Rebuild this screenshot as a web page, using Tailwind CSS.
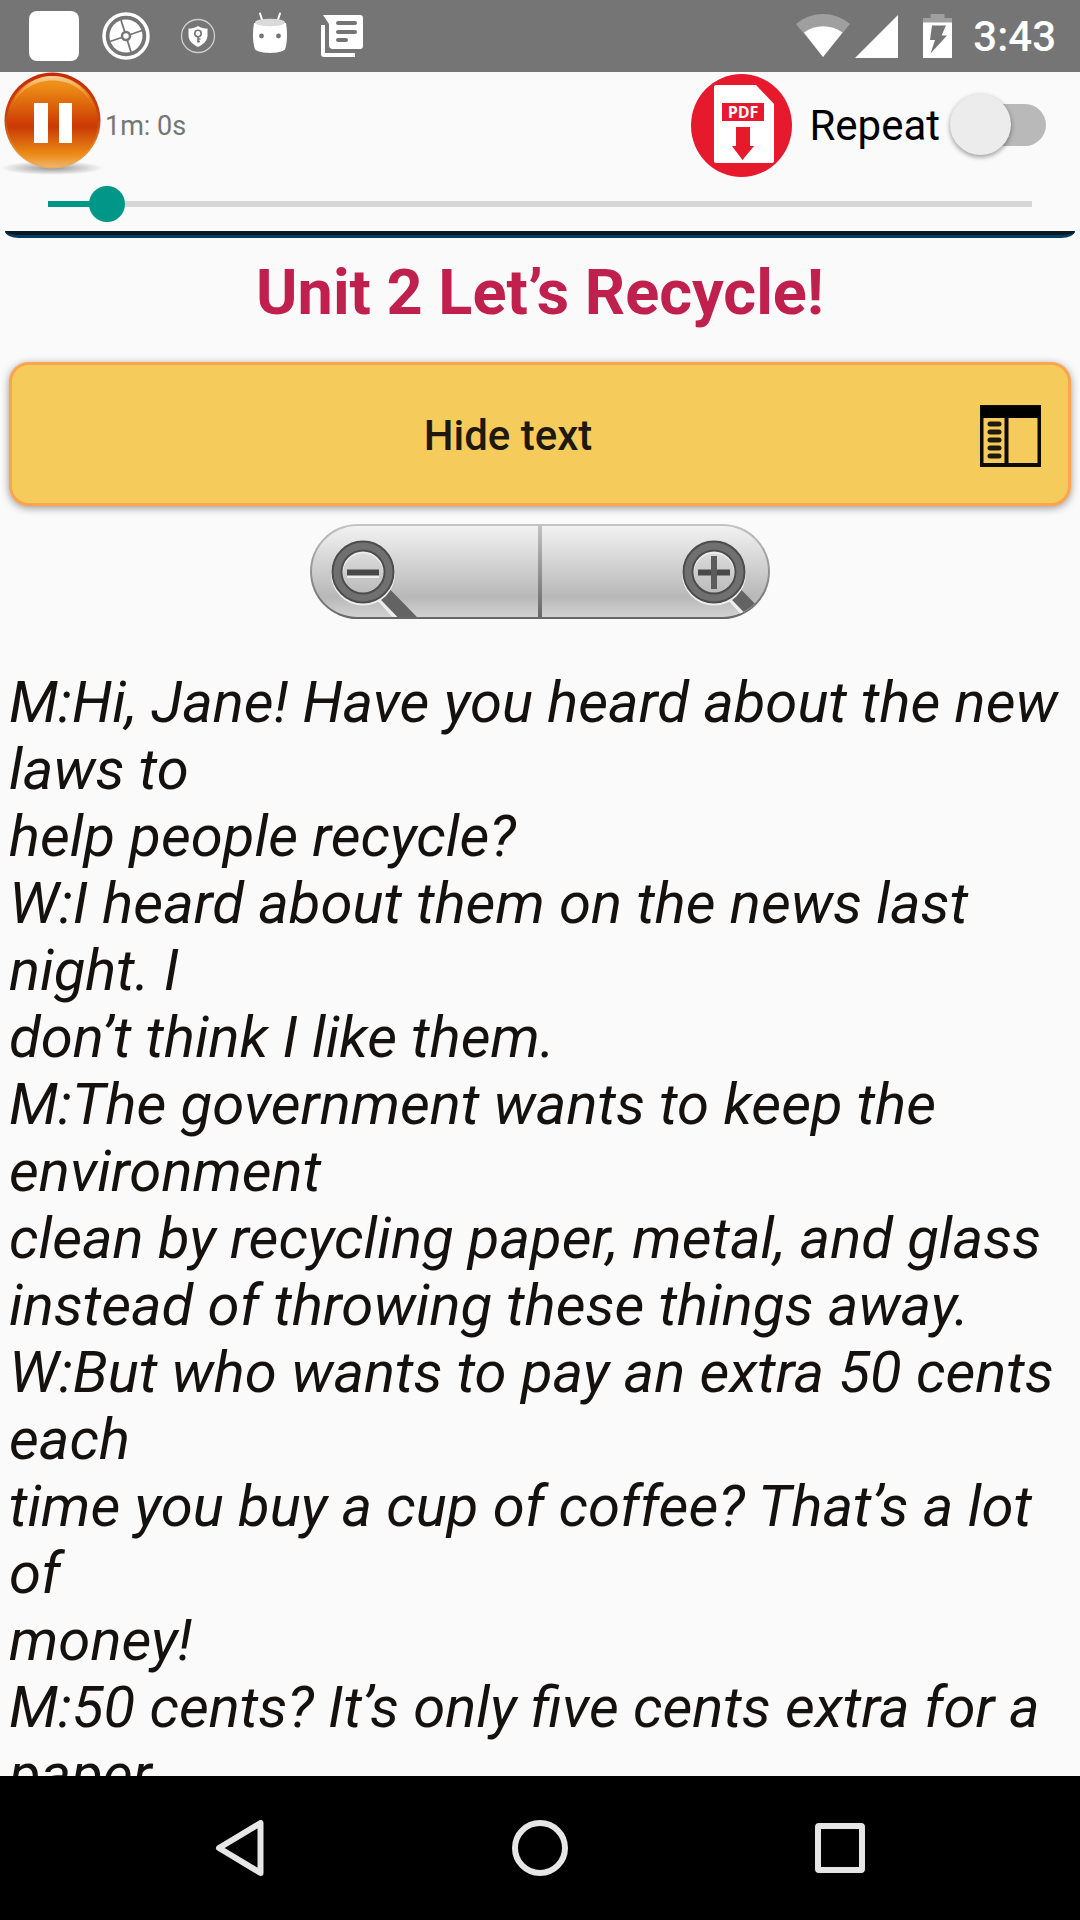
<!DOCTYPE html>
<html lang="en">
<head>
    <meta charset="UTF-8">
    <meta name="viewport" content="width=device-width, initial-scale=1.0">
    <title>Unit 2 Let’s Recycle!</title>
    <script src="https://cdn.jsdelivr.net/npm/@tailwindcss/browser@4"></script>
</head>
<body class="h-screen flex flex-col overflow-hidden bg-[#fafafa] font-[Roboto,sans-serif]">
    <!-- status bar -->
    <div class="h-[72px] shrink-0 bg-[#757575] text-white flex justify-between items-center pl-[18px] pr-6">
        <div class="flex items-center">
            <div class="w-[72px] flex justify-center"><div class="size-[50px] rounded-lg bg-white"></div></div>
            <svg class="w-[72px] h-[72px]" viewBox="0 0 72 72" fill="none">
                <circle cx="36" cy="36" r="22" stroke="#fff" stroke-width="3.5"/>
                <circle cx="36" cy="36" r="16.5" fill="#fff"/>
                <path d="M36 36L31 20M36 36L52 30.500M36 36L41 52M36 36L20 41.500" stroke="#757575" stroke-width="1.800"/>
                <circle cx="36" cy="36" r="4" fill="#fff" stroke="#757575" stroke-width="2.500"/>
            </svg>
            <svg class="w-[72px] h-[72px]" viewBox="0 0 72 72" fill="none">
                <circle cx="36" cy="36" r="16.500" stroke="#d0d0d0" stroke-width="1.300"/>
                <path d="M36 26c3 2 6 2.500 9.500 2.500v7c0 5-4 9-9.500 11.500c-5.500-2.500-9.500-6.500-9.500-11.500v-7c3.500 0 6.500-.5 9.500-2.500z" fill="#fff"/>
                <circle cx="36" cy="33.500" r="3.200" stroke="#757575" stroke-width="1.600"/>
                <path d="M36 36.500v6M36 39h2.500M36 41.500h2" stroke="#757575" stroke-width="1.600"/>
            </svg>
            <svg class="w-[72px] h-[72px]" viewBox="0 0 72 72" fill="none">
                <path d="M26 13.500l3 9M46 13.500l-3 9" stroke="#fff" stroke-width="2" stroke-linecap="round"/>
                <path d="M20 23c-1.500 9-1.500 19 1 26.500c5 4.500 25 4.500 30 0c2.500-7.500 2.500-17.500 1-26.500z" fill="#fff"/>
                <ellipse cx="36" cy="22.500" rx="15" ry="3.800" fill="#dadada"/>
                <circle cx="27.500" cy="36" r="2.400" fill="#757575"/>
                <circle cx="44.500" cy="36" r="2.400" fill="#757575"/>
            </svg>
            <svg class="w-[72px] h-[72px]" viewBox="0 0 72 72" fill="none">
                <path d="M17 15h37a3 3 0 0 1 3 3v28a3 3 0 0 1-3 3H27a4 4 0 0 1-4-4V24z" fill="#fff"/>
                <path d="M15 25h4v28h30v4H18a3 3 0 0 1-3-3z" fill="#fff"/>
                <path d="M32 23h17M32 32h17M32 40h8" stroke="#757575" stroke-width="4" stroke-linecap="round"/>
            </svg>
        </div>
        <div class="flex items-center">
            <svg class="w-[54px] h-[44px]" viewBox="0 0 54 44">
                <path d="M27 43L0 10C16-3.300 38-3.300 54 10z" fill="#9f9f9f"/>
                <path d="M27 43L8 18.500C19 10 35 10 46.500 18.500z" fill="#fff"/>
            </svg>
            <svg class="w-[43px] h-[43px] ml-[5px]" viewBox="0 0 43 43"><path d="M43 0v43H0z" fill="#fff"/></svg>
            <svg class="w-[29px] h-[44px] ml-[25px]" viewBox="0 0 29 44">
                <path d="M7.500 0h14v4H29v5H0V4h7.500z" fill="#9f9f9f"/>
                <path d="M0 8.500h29V44H0z" fill="#fff"/>
                <path d="M9 11.500h14l-4.500 10H24L7.500 39.500L12 26H7z" fill="#757575"/>
            </svg>
            <span class="ml-[21px] pt-[2px] text-[42px] leading-[50px] font-medium">3:43</span>
        </div>
    </div>

    <!-- player controls -->
    <header class="shrink-0">
        <div class="h-[106px] flex items-center pr-[34px]">
            <button aria-label="Pause">
                <svg class="w-[105px] h-[106px]" viewBox="0 0 105 106">
                    <defs>
                        <linearGradient id="orange" x1="0" y1="0" x2="0" y2="1">
                            <stop offset="0" stop-color="#ef9a1c"/>
                            <stop offset=".12" stop-color="#ec8b16"/>
                            <stop offset=".5" stop-color="#cf4206"/>
                            <stop offset=".56" stop-color="#c93a06"/>
                            <stop offset=".86" stop-color="#ec8b16"/>
                            <stop offset="1" stop-color="#f0b46a"/>
                        </linearGradient>
                        <linearGradient id="rim" x1="0" y1="0" x2="0" y2="1">
                            <stop offset="0" stop-color="#c42a08"/>
                            <stop offset=".5" stop-color="#cc4410"/>
                            <stop offset=".8" stop-color="#e48a2c"/>
                            <stop offset="1" stop-color="#efae62"/>
                        </linearGradient>
                        <linearGradient id="gloss" x1="0" y1="0" x2="0" y2="1">
                            <stop offset="0" stop-color="#f7cf95"/>
                            <stop offset="1" stop-color="#ec8b16" stop-opacity=".4"/>
                        </linearGradient>
                        <radialGradient id="shade">
                            <stop offset="0" stop-color="#000" stop-opacity=".4"/>
                            <stop offset="1" stop-color="#000" stop-opacity="0"/>
                        </radialGradient>
                    </defs>
                    <ellipse cx="52" cy="96" rx="52" ry="7" fill="url(#shade)"/>
                    <circle cx="52.500" cy="48.500" r="48" fill="url(#rim)"/>
                    <circle cx="52.500" cy="49.500" r="45.500" fill="url(#orange)"/>
                    <path d="M12 34C27-6 78-6 93 34C77 0 28 0 12 34z" fill="url(#gloss)"/>
                    <path d="M34 31h14v40H34zM59 31h13v40H59z" fill="#fff"/>
                </svg>
            </button>
            <span class="pt-[2px] text-[27px] leading-8 text-[#757575]">1m: 0s</span>
            <button aria-label="Download PDF" class="ml-auto">
                <svg class="w-[102px] h-[106px]" viewBox="0 0 102 106">
                    <ellipse cx="50.500" cy="53.500" rx="50.500" ry="51.500" fill="#e6192d"/>
                    <path d="M25 13h40l18 19v57a2 2 0 0 1-2 2H25a2 2 0 0 1-2-2V15a2 2 0 0 1 2-2z" fill="#fff"/>
                    <path d="M31 31h42v18H31z" fill="#e6192d"/>
                    <text x="52" y="45.500" text-anchor="middle" font-family="Open Sans, sans-serif" font-weight="700" font-size="16" fill="#fff">PDF</text>
                    <path d="M45 55h14v19h4L51.500 88L41 74h4z" fill="#e6192d"/>
                </svg>
            </button>
            <label for="repeat" class="ml-4 pt-[2px] text-[42px] leading-[50px] text-black">Repeat</label>
            <input id="repeat" type="checkbox" class="appearance-none relative ml-[10px] w-24 h-[62px] before:absolute before:left-4 before:right-0 before:top-[10px] before:h-[42px] before:rounded-full before:bg-[#b9b9b9] after:absolute after:left-0 after:top-0 after:size-[61px] after:rounded-full after:bg-[#ececec] after:shadow-[0_2px_5px_rgba(0,0,0,0.4)]">
        </div>
        <div class="mt-2 px-[30px]">
            <input type="range" min="0" max="100" value="6" aria-label="Position" class="block w-full h-9 appearance-none bg-[linear-gradient(to_right,transparent_18px,#009688_18px,#009688_77px,#d6d6d6_77px,#d6d6d6_calc(100%-18px),transparent_calc(100%-18px))] bg-[length:100%_6px] bg-center bg-no-repeat [&::-webkit-slider-thumb]:appearance-none [&::-webkit-slider-thumb]:size-9 [&::-webkit-slider-thumb]:rounded-full [&::-webkit-slider-thumb]:bg-[#009688]">
        </div>
        <div class="mt-[9px] mx-[5px] h-[7px] bg-[#0b1822] border-b-3 border-[#053e64] rounded-b-[14px_7px]"></div>
    </header>

    <main class="flex-1 min-h-0 overflow-hidden px-[9px] pt-[18px]">
        <h1 class="text-center text-[63px] leading-[74px] font-bold text-[#c0204d]">Unit 2 Let’s Recycle!</h1>

        <button class="mt-8 w-full h-[144px] flex items-center pl-6 pr-[27px] pt-[3px] rounded-[20px] border-3 border-[#fca54d] bg-[#f5cb5c] shadow-[0_2px_8px_rgba(0,0,0,0.4)]">
            <span class="flex-1 text-center text-[42px] leading-[50px] font-medium text-[#1e190c]">Hide text</span>
            <svg class="w-[61px] h-[62px]" viewBox="0 0 61 62" fill="none">
                <path d="M1.500 1.500h58v58.500h-58z" stroke="#0d0b05" stroke-width="4"/>
                <path d="M1 1h59v12H1z" fill="#000"/>
                <path d="M26.500 12v48" stroke="#0d0b05" stroke-width="4"/>
                <path d="M10 19h9M10 27h9M10 35h9M10 43h9M10 51h9" stroke="#1f1a0c" stroke-width="5" stroke-linecap="round"/>
            </svg>
        </button>

        <!-- text size -->
        <div class="mt-[18px] mx-auto w-[460px] h-[95px] p-[2px] rounded-full bg-linear-to-b from-[#c4c4c4] to-[#666666]">
            <div class="h-full grid grid-cols-2 gap-1 rounded-full overflow-hidden">
                <button aria-label="Zoom out" class="flex pl-[18px] bg-linear-to-b from-[#f2f2f2] via-[#b8b8b8] via-78% to-[#d2d2d2]">
                    <svg class="w-[87px] h-[91px]" viewBox="0 0 87 91" fill="none">
                        <path d="M53 68L80 98" stroke="#eee" stroke-width="17"/>
                        <path d="M53 66L82 96" stroke="#636363" stroke-width="14"/>
                        <circle cx="33" cy="47.500" r="26" stroke="#ededed" stroke-width="12"/>
                        <circle cx="33" cy="46" r="26" stroke="#4c4c4c" stroke-width="11"/>
                        <circle cx="33" cy="46" r="26" stroke="#707070" stroke-width="7"/>
                        <path d="M17 50.500h32" stroke="#eee" stroke-width="3"/>
                        <path d="M17 46.500h32" stroke="#484848" stroke-width="6"/>
                    </svg>
                </button>
                <button aria-label="Zoom in" class="flex justify-end bg-linear-to-b from-[#f2f2f2] via-[#b8b8b8] via-78% to-[#d2d2d2]">
                    <svg class="w-[87px] h-[91px]" viewBox="0 0 87 91" fill="none">
                        <path d="M53 68L80 98" stroke="#eee" stroke-width="17"/>
                        <path d="M53 66L82 96" stroke="#636363" stroke-width="14"/>
                        <circle cx="33" cy="47.500" r="26" stroke="#ededed" stroke-width="12"/>
                        <circle cx="33" cy="46" r="26" stroke="#4c4c4c" stroke-width="11"/>
                        <circle cx="33" cy="46" r="26" stroke="#707070" stroke-width="7"/>
                        <path d="M17 46.500h32" stroke="#484848" stroke-width="6"/>
                        <path d="M33 30v33" stroke="#5c5c5c" stroke-width="6"/>
                    </svg>
                </button>
            </div>
        </div>

        <p class="mt-[50px] text-[58px] leading-[67px] italic text-[#15110f]">
            M:Hi, Jane! Have you heard about the new laws to<br>
            help people recycle?<br>
            W:I heard about them on the news last night. I<br>
            don’t think I like them.<br>
            M:The government wants to keep the environment<br>
            clean by recycling paper, metal, and glass<br>
            instead of throwing these things away.<br>
            W:But who wants to pay an extra 50 cents each<br>
            time you buy a cup of coffee? That’s a lot of<br>
            money!<br>
            M:50 cents? It’s only five cents extra for a paper
        </p>
    </main>

    <nav class="h-36 shrink-0 bg-black flex justify-center">
        <button aria-label="Back" class="w-[300px] flex justify-center items-center">
            <svg class="size-14" viewBox="0 0 56 56" fill="none"><path d="M48.500 3v50L7 28z" stroke="#e6e6e6" stroke-width="6" stroke-linejoin="round"/></svg>
        </button>
        <button aria-label="Home" class="w-[300px] flex justify-center items-center">
            <svg class="size-14" viewBox="0 0 56 56" fill="none"><circle cx="28" cy="28" r="25" stroke="#e6e6e6" stroke-width="6"/></svg>
        </button>
        <button aria-label="Recent apps" class="w-[300px] flex justify-center items-center">
            <svg class="size-14" viewBox="0 0 56 56" fill="none"><rect x="6" y="6" width="44" height="44" rx="1" stroke="#e6e6e6" stroke-width="6"/></svg>
        </button>
    </nav>
</body>
</html>
